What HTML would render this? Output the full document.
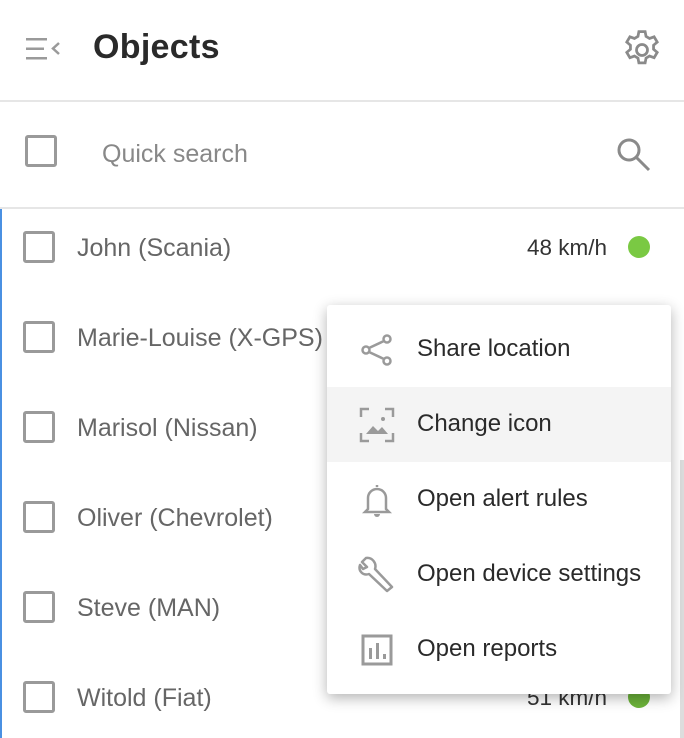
<!DOCTYPE html>
<html><head><meta charset="utf-8"><style>
*{margin:0;padding:0;box-sizing:border-box}
body{width:684px;height:738px;overflow:hidden;background:#fff;font-family:"Liberation Sans",sans-serif;position:relative}
.abs{position:absolute}
.cb{position:absolute;width:32px;height:32px;border:3px solid #9a9a9a;border-radius:3px}
.name{position:absolute;left:77px;font-size:25px;color:#666;line-height:30px}
.mi{position:absolute;left:0;width:344px;height:75px}
.mi span{position:absolute;left:90px;top:22px;font-size:24px;color:#2a2a2a;line-height:30px}
.mi svg{position:absolute;left:32px;top:20px}
</style></head><body>
<svg class="abs" style="left:26px;top:36px" width="36" height="26" viewBox="0 0 36 26"><g fill="#9a9a9a"><rect x="0" y="2" width="21" height="2.5"/><rect x="0" y="11.5" width="18" height="2.5"/><rect x="0" y="21" width="21" height="2.5"/></g><path d="M33 7 L27 12.5 L33 18" fill="none" stroke="#9a9a9a" stroke-width="2.5"/></svg>
<div class="abs" style="left:93px;top:28px;font-size:34px;color:#2a2a2a;font-weight:bold;letter-spacing:0.3px">Objects</div>
<svg class="abs" style="left:620px;top:28px" width="44" height="44" viewBox="0 0 24 24"><path fill="none" stroke="#8a8a8a" stroke-width="1.5" d="M10.3 2h3.4l.5 2.6 1.9 1.1 2.5-.9 1.7 2.9-2 1.7v2.2l2 1.7-1.7 2.9-2.5-.9-1.9 1.1-.5 2.6h-3.4l-.5-2.6-1.9-1.1-2.5.9-1.7-2.9 2-1.7V9.4l-2-1.7 1.7-2.9 2.5.9 1.9-1.1z"/><circle cx="12" cy="12" r="3" fill="none" stroke="#8a8a8a" stroke-width="1.5"/></svg>
<div class="abs" style="left:0;top:100px;width:684px;height:2px;background:#e6e6e6"></div>
<div class="cb" style="left:25px;top:135px"></div>
<div class="abs" style="left:102px;top:140px;font-size:25px;color:#888">Quick search</div>
<svg class="abs" style="left:615px;top:136px" width="38" height="36" viewBox="0 0 38 36"><circle cx="14" cy="14" r="10" fill="none" stroke="#8a8a8a" stroke-width="3"/><path d="M21 21 L34 34" stroke="#8a8a8a" stroke-width="3"/></svg>
<div class="abs" style="left:0;top:207px;width:684px;height:2px;background:#e6e6e6"></div>
<div class="abs" style="left:0;top:209px;width:2px;height:529px;background:#4a90e2"></div>
<div class="abs" style="left:680px;top:460px;width:4px;height:278px;background:#ddd"></div>

<div class="cb" style="left:23px;top:231px"></div><div class="name" style="top:233px">John (Scania)</div>
<div class="abs" style="left:527px;top:235px;font-size:22.5px;color:#333">48 km/h</div>
<div class="abs" style="left:628px;top:236px;width:22px;height:22px;border-radius:50%;background:#7ac943"></div>
<div class="cb" style="left:23px;top:321px"></div><div class="name" style="top:323px">Marie-Louise (X-GPS)</div>
<div class="cb" style="left:23px;top:411px"></div><div class="name" style="top:413px">Marisol (Nissan)</div>
<div class="cb" style="left:23px;top:501px"></div><div class="name" style="top:503px">Oliver (Chevrolet)</div>
<div class="cb" style="left:23px;top:591px"></div><div class="name" style="top:593px">Steve (MAN)</div>
<div class="cb" style="left:23px;top:681px"></div><div class="name" style="top:683px">Witold (Fiat)</div>
<div class="abs" style="left:527px;top:685px;font-size:22.5px;color:#333">51 km/h</div>
<div class="abs" style="left:628px;top:686px;width:22px;height:22px;border-radius:50%;background:#6cb33a"></div>

<div class="abs" style="left:327px;top:305px;width:344px;height:389px;background:#fff;border-radius:3px;box-shadow:0 4px 14px rgba(0,0,0,.3)">
 <div class="mi" style="top:7px"><svg width="36" height="36" viewBox="0 0 36 36"><g fill="none" stroke="#9a9a9a" stroke-width="2.5"><circle cx="28" cy="7" r="3.5"/><circle cx="7" cy="18" r="3.5"/><circle cx="28" cy="29" r="3.5"/><path d="M10 16 L25 9 M10 20 L25 27"/></g></svg><span>Share location</span></div>
 <div class="mi" style="top:82px;background:#f4f4f4"><svg width="36" height="36" viewBox="0 0 36 36"><g fill="none" stroke="#9a9a9a" stroke-width="2.5"><path d="M2 10V2h8M26 2h8v8M34 26v8h-8M10 34H2v-8"/></g><circle cx="24" cy="12" r="2" fill="#9a9a9a"/><path d="M7 27 L14 19 L19 24 L23 20 L29 27Z" fill="#9a9a9a"/></svg><span>Change icon</span></div>
 <div class="mi" style="top:157px"><svg width="36" height="36" viewBox="0 0 36 36"><g fill="none" stroke="#9a9a9a" stroke-width="2.5"><path d="M18 3v2M9 27V16a9 9 0 0 1 18 0v11l3 3H6z"/></g><path d="M15 32h6a3 3 0 0 1-6 0z" fill="#9a9a9a"/></svg><span>Open alert rules</span></div>
 <div class="mi" style="top:232px"><svg width="38" height="38" viewBox="0 0 38 38" style="left:30px;top:18px"><path fill="none" stroke="#9a9a9a" stroke-width="2.5" stroke-linejoin="round" d="M9 3 L5 7 L10 12 L6 14 L3 10 C1 16 6 21 12 19 L30 36 L35 32 L18 14 C20 8 15 2 9 3Z"/></svg><span>Open device settings</span></div>
 <div class="mi" style="top:307px"><svg width="36" height="36" viewBox="0 0 36 36"><rect x="4" y="4" width="28" height="28" fill="none" stroke="#9a9a9a" stroke-width="3"/><g fill="#9a9a9a"><rect x="10" y="16" width="3" height="11"/><rect x="17" y="11" width="3" height="16"/><rect x="24" y="22" width="3" height="5"/></g></svg><span>Open reports</span></div>
</div>
</body></html>
